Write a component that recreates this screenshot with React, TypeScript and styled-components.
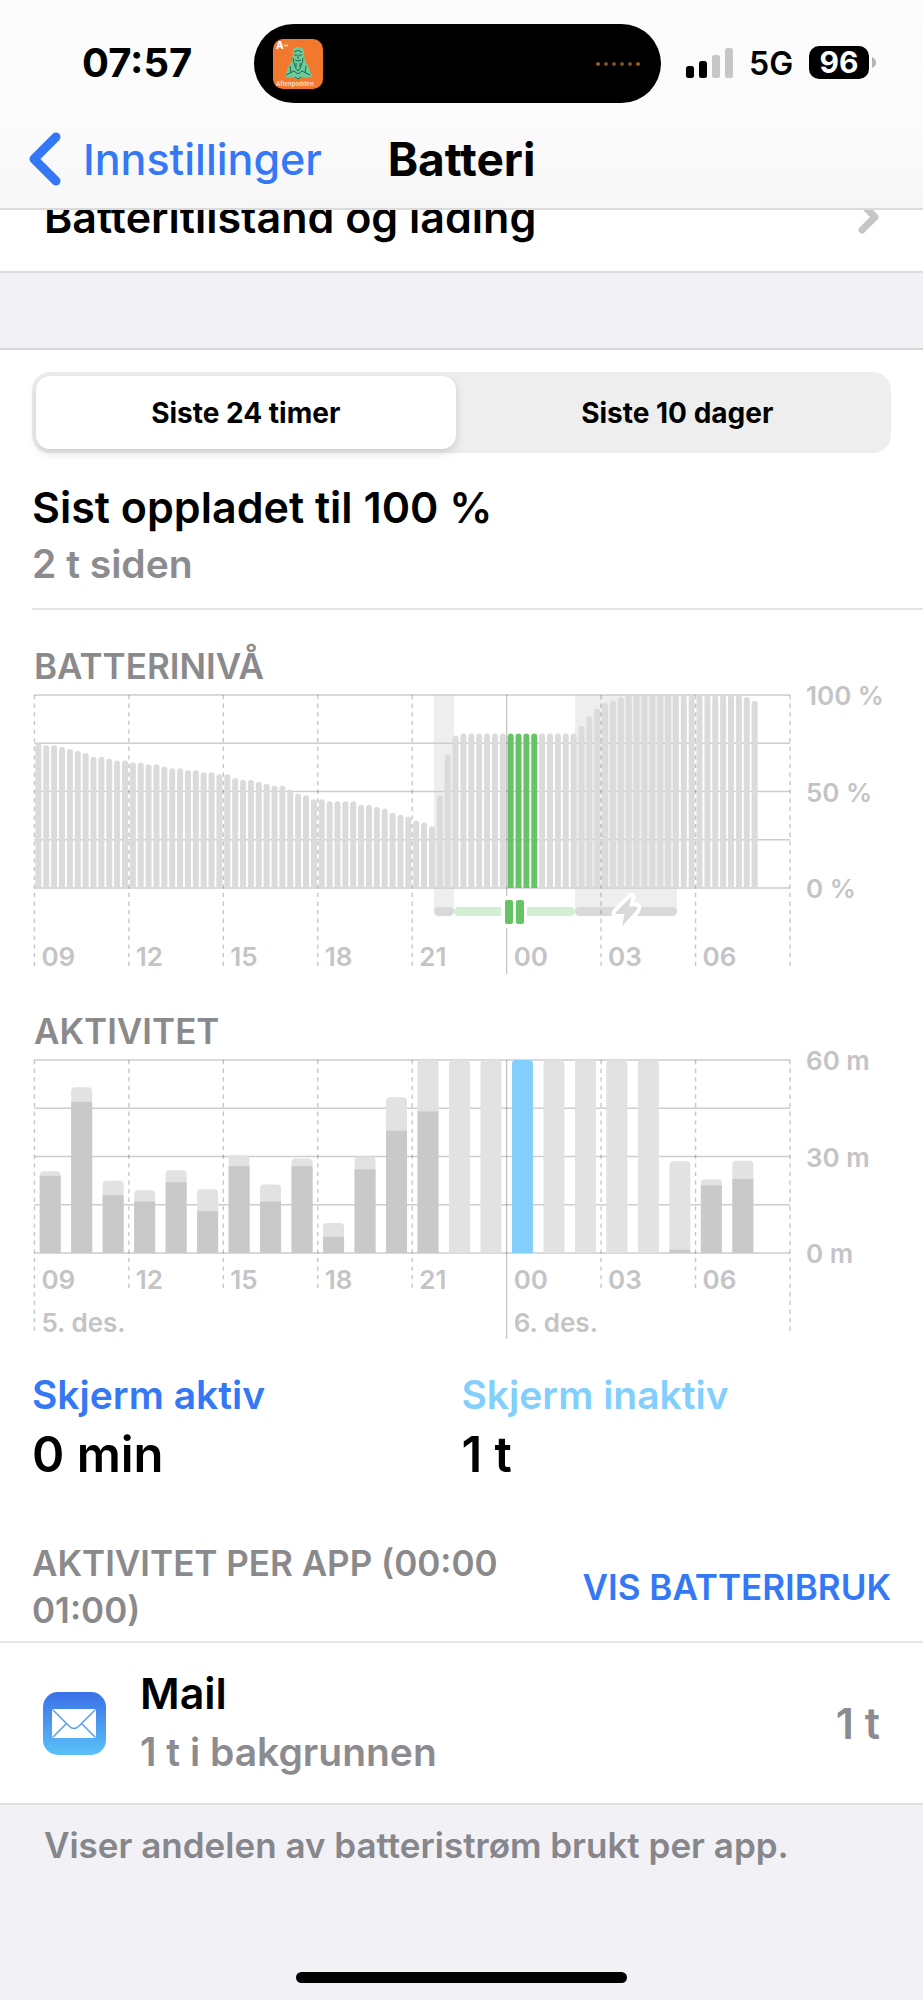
import React, { useState } from "react";
import styled, { createGlobalStyle } from "styled-components";

const Global = createGlobalStyle`
  * { box-sizing: border-box; }
  body { margin: 0; background: #f1f1f6; font-family: Inter, "Liberation Sans", sans-serif; color: #000; }
  h1, h2, h3, p, ul { margin: 0; padding: 0; font-weight: 600; }
  button { border: 0; padding: 0; background: none; font-family: inherit; color: inherit; cursor: pointer; }
`;

const Screen = styled.div`
  min-height: 100vh;
  display: flex;
  flex-direction: column;
`;

const Header = styled.header`
  height: 210px;
  background: linear-gradient(#fcfcfd, #fbfbfc 60%, #f7f7f7);
  border-bottom: 2px solid #dbdbdc;
  display: flex;
  flex-direction: column;
`;

const StatusBar = styled.div`
  display: grid;
  grid-template-columns: 1fr 407px 1fr;
  align-items: center;
  height: 79px;
  margin-top: 24px;
  padding-right: 8px;
`;

const Clock = styled.time`
  font-size: 40px;
  line-height: 48px;
  font-weight: 700;
  padding-left: 82px;
  margin-bottom: 2px;
`;

const Island = styled.div`
  height: 79px;
  border-radius: 40px;
  background: #000;
  display: flex;
  align-items: center;
  justify-content: space-between;
  padding: 0 20px 0 19px;
`;

const Signals = styled.div`
  display: flex;
  align-items: center;
  padding-left: 25px;
  margin-bottom: 2px;
  svg { flex: none; }
`;

const Network = styled.span`
  font-size: 32px;
  line-height: 36px;
  font-weight: 600;
  margin: 2px 16px 0;
`;

const BatteryPill = styled.span`
  width: 60px;
  height: 33px;
  border-radius: 10px;
  background: #000;
  color: #fff;
  font-size: 30px;
  line-height: 33px;
  font-weight: 700;
  text-align: center;
  margin-right: 3px;
`;

const NavBar = styled.nav`
  flex: 1;
  display: grid;
  grid-template-columns: 1fr auto 1fr;
  align-items: center;
  padding: 6px 28px 0;
`;

const Back = styled.a`
  display: flex;
  align-items: center;
  gap: 21px;
  color: #3478f6;
  font-size: 43px;
  line-height: 52px;
  font-weight: 500;
  text-decoration: none;
`;

const NavTitle = styled.h1`
  font-size: 46px;
  line-height: 52px;
  font-weight: 700;
`;

const ClippedRow = styled.a`
  height: 63px;
  overflow: hidden;
  background: #fff;
  border-bottom: 2px solid #dcdcde;
  display: flex;
  align-items: flex-end;
  justify-content: space-between;
  padding: 0 44px 28px;
  color: #000;
  font-size: 43px;
  line-height: 52px;
  font-weight: 600;
  text-decoration: none;
`;

const Panel = styled.main`
  margin-top: 75px;
  background: #fff;
  border-top: 2px solid #d8d8da;
  border-bottom: 2px solid #e0e0e2;
`;

const Segmented = styled.div`
  display: grid;
  grid-template-columns: 1fr 1fr;
  gap: 12px;
  height: 81px;
  margin: 22px 32px 0;
  padding: 4px;
  border-radius: 18px;
  background: #eee;
`;

const Segment = styled.button<{ $on: boolean }>`
  border-radius: 14px;
  font-size: 28px;
  line-height: 36px;
  font-weight: 700;
  background: ${(p) => (p.$on ? "#fff" : "transparent")};
  box-shadow: ${(p) => (p.$on ? "0 4px 10px rgba(0,0,0,.14)" : "none")};
`;

const Charged = styled.section`
  margin-left: 32px;
  padding: 26px 0 15px;
  border-bottom: 2px solid #e4e4e5;
`;

const Primary = styled.h2`
  font-size: 43px;
  line-height: 56px;
`;

const Secondary = styled.p`
  font-size: 39px;
  line-height: 58px;
  color: #8c8c90;
`;

const ChartBlock = styled.section`
  padding: 34px 32px 0;
  svg { display: block; width: 100%; height: auto; overflow: visible; }
`;

const Caption = styled.h3`
  padding: 0 2px 7px;
  font-size: 35px;
  line-height: 44px;
  color: #8a8a8c;
`;

const Totals = styled.section`
  display: grid;
  grid-template-columns: 1fr 1fr;
  padding: 27px 32px 0;
`;

const TotalLabel = styled.p<{ $color: string }>`
  font-size: 39px;
  line-height: 56px;
  color: ${(p) => p.$color};
`;

const TotalValue = styled.p`
  font-size: 49px;
  line-height: 64px;
`;

const ListHead = styled.div`
  display: flex;
  align-items: center;
  justify-content: space-between;
  padding: 53px 32px 7px;
  border-bottom: 2px solid #e6e6e7;
`;

const ListTitle = styled.h3`
  width: 500px;
  font-size: 35px;
  line-height: 47px;
  color: #8a8a8c;
`;

const Toggle = styled.button`
  font-size: 35px;
  line-height: 44px;
  font-weight: 600;
  color: #3478f6;
  white-space: nowrap;
`;

const AppRow = styled.li`
  display: flex;
  align-items: center;
  height: 160px;
  padding: 0 43px;
  list-style: none;
  svg { flex: none; }
`;

const AppText = styled.div`
  flex: 1;
  display: flex;
  flex-direction: column;
  gap: 2px;
  margin-left: 34px;
`;

const AppTime = styled.span`
  font-size: 43px;
  line-height: 56px;
  font-weight: 600;
  color: #8c8c90;
`;

const Footnote = styled.p`
  padding: 18px 44px;
  font-size: 35px;
  line-height: 44px;
  color: #86868b;
`;

const HomeIndicator = styled.div`
  width: 331px;
  height: 11px;
  margin: auto auto 17px;
  border-radius: 6px;
  background: #000;
`;

const battery = [
  75, 74, 74, 73, 72, 71, 70, 68, 68, 67, 66, 66,
  65, 65, 64, 64, 63, 62, 62, 61, 61, 60, 60, 59,
  59, 57, 56, 56, 55, 54, 53, 53, 51, 49, 48, 46,
  46, 45, 45, 45, 45, 43, 43, 42, 41, 39, 38, 37,
  35, 34, 32, 48, 69, 79, 80, 80, 80, 80, 80, 80,
  80, 80, 80, 80, 80, 80, 80, 80, 80, 84, 89, 93,
  96, 97, 99, 100, 100, 100, 100, 100, 100, 100, 100, 100,
  100, 100, 100, 100, 100, 100, 99, 97,
];

// [minutes in total, minutes with the screen on] for each hour
const activity = [
  [25.4, 24], [51.5, 47], [22.5, 18], [19.5, 16], [25.7, 22], [19.8, 13],
  [30.4, 27], [21.3, 16], [29.4, 27], [9.3, 5], [30, 26], [48.4, 38],
  [60, 44], [60, 0], [60, 0], [60, 0], [60, 0], [60, 0],
  [60, 0], [60, 0], [28.5, 1], [22.9, 21], [28.7, 23],
];

const hours = ["09", "12", "15", "18", "21", "00", "03", "06"];
const LEFT = 2.4;
const WIDTH = 755.6;
const PLOT = 193;
const LINE = "#cdcdcf";

const topRounded = (x: number, y: number, w: number, h: number, r: number) =>
  `M${x} ${y + h}V${y + r}q0 ${-r} ${r} ${-r}h${w - 2 * r}q${r} 0 ${r} ${r}V${y + h}z`;

function HourLines({ bottom, ends, midnight, split }: { bottom: number; ends: number; midnight: number; split?: boolean }) {
  return (
    <g stroke="#000" strokeOpacity=".22" strokeWidth="1.4" fill="none">
      {Array.from({ length: 9 }, (_, i) => {
        const x = LEFT + (WIDTH / 8) * i;
        if (i === 5) return <path key={i} d={split ? `M${x} 0V201M${x} 233V${midnight}` : `M${x} 0V${midnight}`} />;
        return <path key={i} d={`M${x} 0V${i === 0 || i === 8 ? ends : bottom}`} strokeDasharray="4.3 4.3" />;
      })}
    </g>
  );
}

function Grid() {
  return (
    <g stroke={LINE} strokeWidth="1.4">
      {[0, 1, 2, 3, 4].map((i) => (
        <path key={i} d={`M${LEFT} ${(PLOT / 4) * i}H${LEFT + WIDTH}`} />
      ))}
    </g>
  );
}

function AxisText({ values, hourY }: { values: string[]; hourY: number }) {
  return (
    <g fill="#c4c4c6" fontSize="26" fontWeight="600">
      {values.map((v, i) => <text key={v} x="774" y={10 + (PLOT / 2) * i}>{v}</text>)}
      {hours.map((h, i) => <text key={h} x={LEFT + 7 + (WIDTH / 8) * i} y={hourY}>{h}</text>)}
    </g>
  );
}

function BatteryChart() {
  const step = WIDTH / 96;
  return (
    <svg viewBox="0 0 859 280" role="img" aria-label="Batterinivå">
      <rect x="402" y="0" width="20" height="216" fill="#eee" />
      <rect x="543" y="0" width="102" height="216" fill="#eee" />
      <Grid />
      {battery.map((v, i) => {
        const h = (v / 100) * PLOT;
        return <path key={i} d={topRounded(LEFT + 1 + i * step, PLOT - h, 6, h, 3)} fill={i >= 60 && i < 64 ? "#66c466" : "#dbdbdb"} />;
      })}
      <rect x="402" y="212" width="20" height="9" rx="4.5" fill="#d9d9d9" />
      <path d="M469 212H426.500a4.500 4.500 0 0 0 0 9H469zM495 212H538.500a4.500 4.500 0 0 1 0 9H495z" fill="#d2efd6" />
      <rect x="543" y="212" width="102" height="9" rx="4.5" fill="#d9d9d9" />
      <HourLines bottom={275} ends={275} midnight={279} split />
      <rect x="473" y="205" width="8" height="24" rx="2" fill="#66c466" />
      <rect x="484" y="205" width="8" height="24" rx="2" fill="#66c466" />
      <path d="M599.500 201.500L584.500 216.500Q582.500 219 585 219H592.500L590 231.500L604.500 215Q606.500 212 604 211.500H597z" fill="#d9d9d9" stroke="#fff" strokeWidth="8" strokeLinejoin="round" paintOrder="stroke" />
      <AxisText values={["100 %", "50 %", "0 %"]} hourY={271} />
    </svg>
  );
}

function ActivityChart() {
  const step = WIDTH / 24;
  return (
    <svg viewBox="0 0 859 280" role="img" aria-label="Aktivitet">
      <Grid />
      {activity.map(([total, active], i) => {
        const x = LEFT + 5.3 + i * step;
        const h = (total / 60) * PLOT;
        const a = (active / 60) * PLOT;
        return (
          <g key={i}>
            <path d={topRounded(x, PLOT - h, 21, h, 4)} fill={i === 15 ? "#82cefc" : "#e2e2e2"} />
            <rect x={x} y={PLOT - a} width="21" height={a} fill="#c9c9c9" />
          </g>
        );
      })}
      <HourLines bottom={232} ends={275} midnight={279} />
      <AxisText values={["60 m", "30 m", "0 m"]} hourY={229} />
      <g fill="#c4c4c6" fontSize="26" fontWeight="600">
        <text x={LEFT + 7} y="272">5. des.</text>
        <text x={LEFT + 7 + (WIDTH / 8) * 5} y="272">6. des.</text>
      </g>
    </svg>
  );
}

function PodcastArt() {
  return (
    <svg width="50" height="50" viewBox="0 0 50 50" aria-hidden="true">
      <rect width="50" height="50" rx="10" fill="#f1782c" />
      <path d="M25 8c4 0 6 2 6 6l1 8c3 3 4 7 5 10l2 5c-3 2-7 2-10 1l-4 3-4-3c-3 1-7 1-9-1l2-5c1-3 2-7 5-10l1-8c0-4 1-6 5-6z" fill="#6ccb9b" />
      <path d="M21 13q4-3 8 0M21 16h3M26 16h3M25 16v4M20 19q1 9 5 13 4-4 5-13M22 21q3 2 6 0M23 24v4M27 24v4M17 27l1 7M33 27l-1 7M13 36l8-4 4 3 4-3 8 4M22 38l3 2 3-2" stroke="#24664a" strokeWidth="1" fill="none" />
      <text x="3" y="10" fontSize="10" fontWeight="800" fill="#fff">A</text>
      <path d="M11 6.500h4" stroke="#fde0c8" strokeWidth="1.500" />
      <text x="3" y="47" fontSize="6" fontWeight="600" fill="#fde0c8">Aftenpodden</text>
    </svg>
  );
}

function MailIcon() {
  return (
    <svg width="63" height="63" viewBox="0 0 63 63" aria-hidden="true">
      <defs>
        <linearGradient id="mail" x1="0" y1="0" x2="0" y2="1">
          <stop offset="0" stopColor="#3a6fe8" />
          <stop offset="1" stopColor="#5bc2f7" />
        </linearGradient>
      </defs>
      <rect width="63" height="63" rx="15" fill="url(#mail)" />
      <rect x="9" y="17" width="44" height="29" rx="2" fill="#fff" />
      <path d="M10 18L26.500 34.500Q31 38.500 35.500 34.500L52 18M10 45L23.500 31.500M52 45L38.500 31.500" fill="none" stroke="#559ff2" strokeWidth="1.500" />
    </svg>
  );
}

export default function App() {
  const [tab, setTab] = useState(0);
  return (
    <Screen>
      <Global />
      <Header>
        <StatusBar>
          <Clock>07:57</Clock>
          <Island>
            <PodcastArt />
            <svg width="46" height="6" viewBox="0 0 46 6" aria-hidden="true">
              {[0, 1, 2, 3, 4, 5].map((i) => (
                <circle key={i} cx={3 + i * 8} cy="3" r="2" fill={i === 0 || i === 5 ? "#a05a18" : "#7d5220"} />
              ))}
            </svg>
          </Island>
          <Signals>
            <svg width="47" height="30" viewBox="0 0 47 30" aria-hidden="true">
              <rect x="0" y="18" width="8" height="12" rx="2.500" />
              <rect x="13" y="13" width="8" height="17" rx="2.500" />
              <rect x="26" y="7" width="8" height="23" rx="2.500" fill="#c7c7c9" />
              <rect x="39" y="0" width="8" height="30" rx="2.500" fill="#c7c7c9" />
            </svg>
            <Network>5G</Network>
            <BatteryPill>96</BatteryPill>
            <svg width="4" height="11" viewBox="0 0 4 11" aria-hidden="true">
              <path d="M0 0Q4 2 4 5.500T0 11z" fill="#b5b5b7" />
            </svg>
          </Signals>
        </StatusBar>
        <NavBar>
          <Back href="#innstillinger">
            <svg width="34" height="54" viewBox="0 0 34 54" aria-hidden="true">
              <path d="M28 5L6 27L28 49" fill="none" stroke="#3478f6" strokeWidth="9" strokeLinecap="round" strokeLinejoin="round" />
            </svg>
            Innstillinger
          </Back>
          <NavTitle>Batteri</NavTitle>
        </NavBar>
      </Header>
      <ClippedRow href="#tilstand">
        <span>Batteritilstand og lading</span>
        <svg width="21" height="52" viewBox="0 0 21 52" aria-hidden="true">
          <path d="M4 13L17 26L4 39" fill="none" stroke="#c5c5c7" strokeWidth="7" strokeLinecap="round" strokeLinejoin="round" />
        </svg>
      </ClippedRow>
      <Panel>
        <Segmented>
          {["Siste 24 timer", "Siste 10 dager"].map((label, i) => (
            <Segment key={label} $on={tab === i} aria-pressed={tab === i} onClick={() => setTab(i)}>{label}</Segment>
          ))}
        </Segmented>
        <Charged>
          <Primary>Sist oppladet til 100 %</Primary>
          <Secondary>2 t siden</Secondary>
        </Charged>
        <ChartBlock>
          <Caption>BATTERINIVÅ</Caption>
          <BatteryChart />
        </ChartBlock>
        <ChartBlock>
          <Caption>AKTIVITET</Caption>
          <ActivityChart />
        </ChartBlock>
        <Totals>
          <div>
            <TotalLabel $color="#3478f6">Skjerm aktiv</TotalLabel>
            <TotalValue>0 min</TotalValue>
          </div>
          <div>
            <TotalLabel $color="#82cefc">Skjerm inaktiv</TotalLabel>
            <TotalValue>1 t</TotalValue>
          </div>
        </Totals>
        <ListHead>
          <ListTitle>AKTIVITET PER APP (00:00 01:00)</ListTitle>
          <Toggle>VIS BATTERIBRUK</Toggle>
        </ListHead>
        <ul>
          <AppRow>
            <MailIcon />
            <AppText>
              <Primary>Mail</Primary>
              <Secondary>1 t i bakgrunnen</Secondary>
            </AppText>
            <AppTime>1 t</AppTime>
          </AppRow>
        </ul>
      </Panel>
      <Footnote>Viser andelen av batteristrøm brukt per app.</Footnote>
      <HomeIndicator />
    </Screen>
  );
}
